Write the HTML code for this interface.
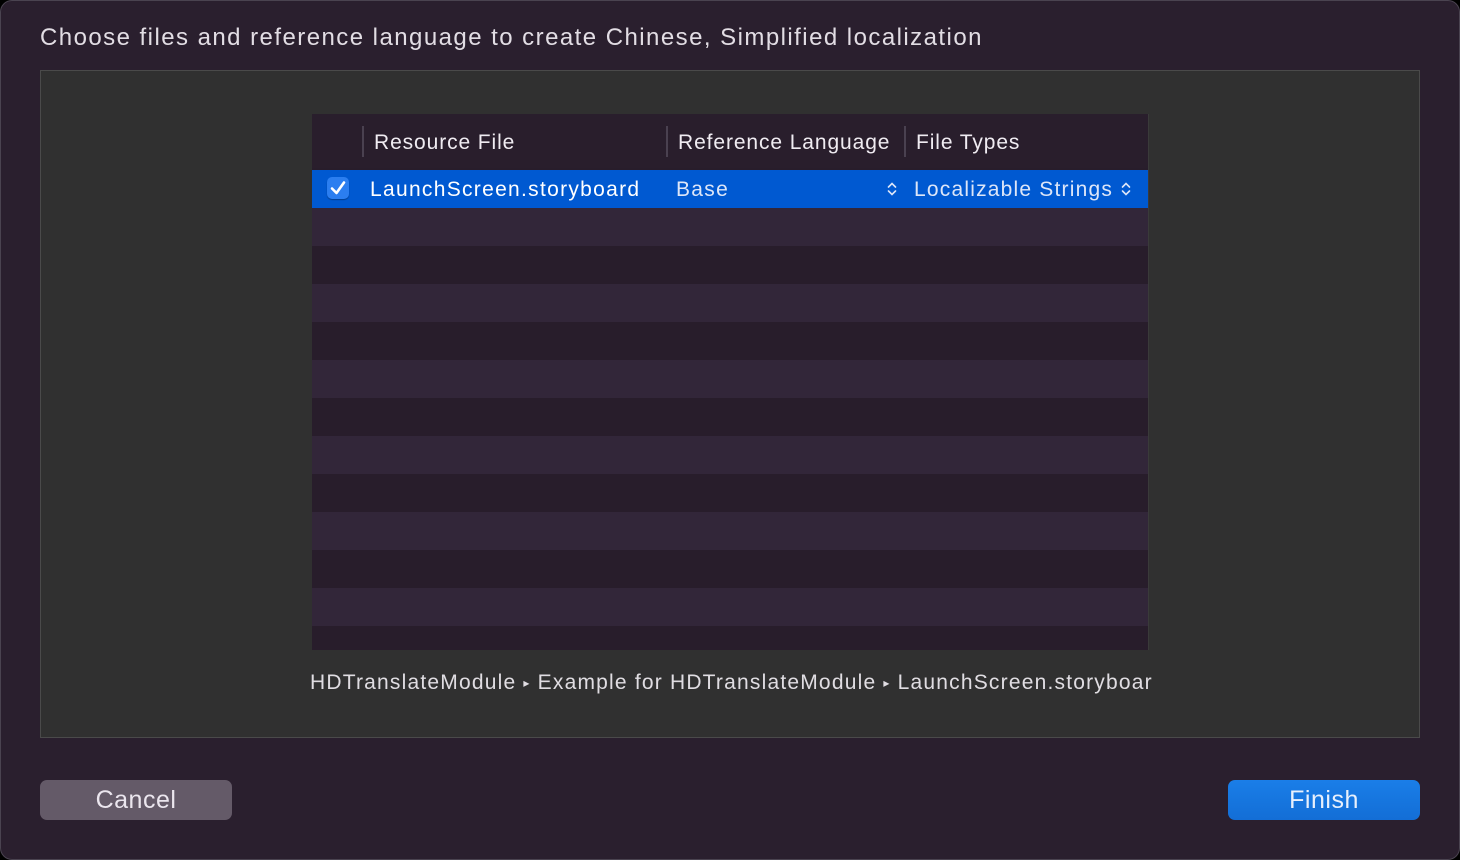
<!DOCTYPE html>
<html><head><style>
body{margin:0;width:1460px;height:860px;background:#000;font-family:"Liberation Sans",sans-serif;overflow:hidden}
.win{position:absolute;left:0;top:0;width:1460px;height:860px;box-sizing:border-box;background:#2a1f2e;border:1px solid #4a4350;border-radius:12px}
.title{position:absolute;left:39px;top:23px;font-size:24px;color:#e2dde4;letter-spacing:1.45px}
.panel{position:absolute;left:39px;top:69px;width:1378px;height:666px;background:#303030;border:1px solid #4a4a4a}
.table{position:absolute;left:311px;top:113px;width:836px;height:536px;background:#281d2b;overflow:hidden;border-right:1px solid #3a3a3a}
.hdr{position:absolute;left:0;top:0;width:836px;height:54px;background:#291e2c}
.h{position:absolute;top:17px;font-size:21px;color:#f0ecf2;letter-spacing:0.9px}
.sep{position:absolute;top:12px;width:2px;height:31px;background:#4a4150}
.row{position:absolute;left:0;width:836px;height:38px}
.sel{top:56px;background:#0059d1}
.l{background:#322639}
.c{position:absolute;top:8px;font-size:21px;color:#fff;letter-spacing:1.3px}
.btn{position:absolute;top:779px;width:192px;height:40px;border-radius:7px;font-size:25px;text-align:center;line-height:40px;letter-spacing:0.5px}
</style></head><body>
<div class="win">
<div class="title">Choose files and reference language to create Chinese, Simplified localization</div>
<div class="panel"></div>
<div class="table">
<div class="hdr">
<div class="sep" style="left:50px"></div>
<div class="h" style="left:62px">Resource File</div>
<div class="sep" style="left:354px"></div>
<div class="h" style="left:366px">Reference Language</div>
<div class="sep" style="left:592px"></div>
<div class="h" style="left:604px">File Types</div>
</div>
<div class="row sel">
<div style="position:absolute;left:15px;top:7px;width:22px;height:22px;border-radius:5px;background:#2b7ef0;box-shadow:0 1px 1px rgba(0,0,0,.3)"><svg width="22" height="22"><path d="M5 11.5 L9.5 16 L17 5.5" stroke="#fff" stroke-width="2.6" fill="none" stroke-linecap="round" stroke-linejoin="round"/></svg></div>
<div class="c" style="left:58px">LaunchScreen.storyboard</div>
<div class="c" style="left:364px;color:#dde6f8">Base</div>
<svg style="position:absolute;left:574px;top:11px" width="12" height="16"><path d="M2.5 6 L6 2.5 L9.5 6 M2.5 10 L6 13.5 L9.5 10" stroke="#dde6f8" stroke-width="1.6" fill="none" stroke-linecap="round"/></svg>
<div class="c" style="left:602px;color:#dde6f8;letter-spacing:1.2px">Localizable Strings</div>
<svg style="position:absolute;left:808px;top:11px" width="12" height="16"><path d="M2.5 6 L6 2.5 L9.5 6 M2.5 10 L6 13.5 L9.5 10" stroke="#dde6f8" stroke-width="1.6" fill="none" stroke-linecap="round"/></svg>
</div>
<div class="row l" style="top:94px"></div>
<div class="row l" style="top:170px"></div>
<div class="row l" style="top:246px"></div>
<div class="row l" style="top:322px"></div>
<div class="row l" style="top:398px"></div>
<div class="row l" style="top:474px"></div>
</div>
<div style="position:absolute;left:309px;top:670px;font-size:21px;color:#e0dde2;white-space:nowrap;letter-spacing:1.2px">HDTranslateModule <span style="font-size:12px;position:relative;top:-2px">▸</span> Example for HDTranslateModule <span style="font-size:12px;position:relative;top:-2px">▸</span> LaunchScreen.storyboar</div>
<div class="btn" style="left:39px;background:#645a68;color:#ebe6ee">Cancel</div>
<div class="btn" style="left:1227px;background:linear-gradient(#1a7ee8,#136ed6);color:#e8f0fc">Finish</div>
</div>
</body></html>
